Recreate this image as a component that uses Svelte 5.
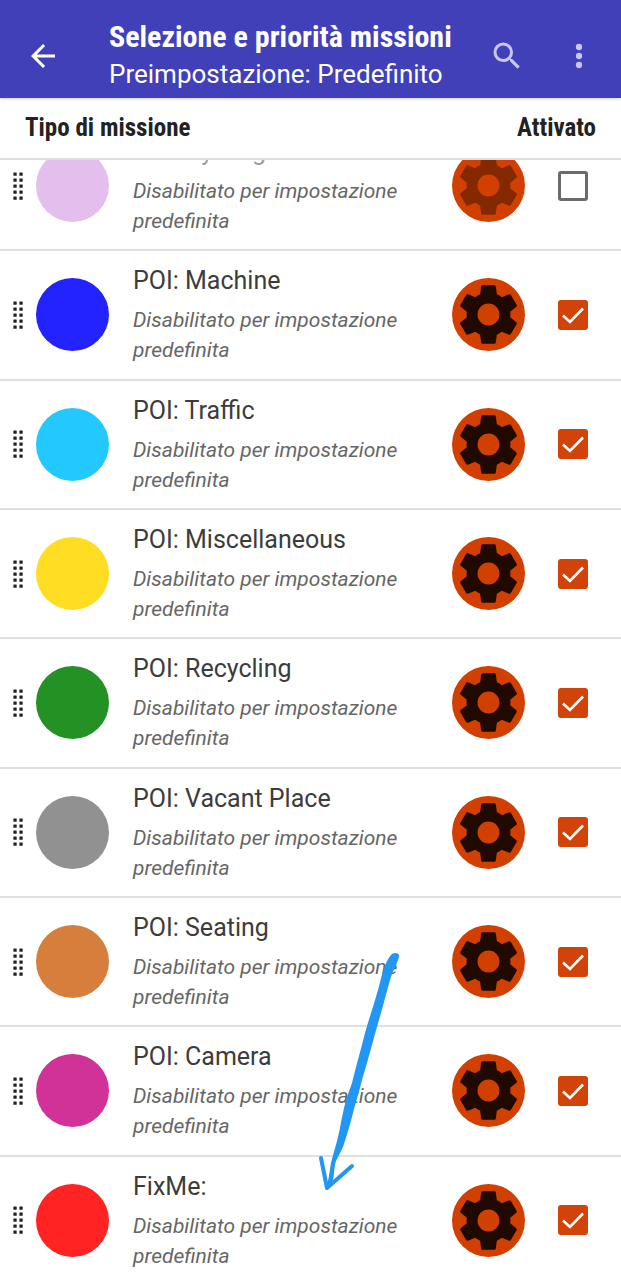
<script>
    let quests = [
        { id: "cycling", title: "POI: Cycling", color: "#e4bfed", enabled: false },
        { id: "machine", title: "POI: Machine", color: "#2323ff", enabled: true },
        { id: "traffic", title: "POI: Traffic", color: "#23c8ff", enabled: true },
        { id: "misc", title: "POI: Miscellaneous", color: "#ffdd23", enabled: true },
        { id: "recycling", title: "POI: Recycling", color: "#239123", enabled: true },
        { id: "vacant", title: "POI: Vacant Place", color: "#919191", enabled: true },
        { id: "seating", title: "POI: Seating", color: "#d67f3c", enabled: true },
        { id: "camera", title: "POI: Camera", color: "#d03297", enabled: true },
        { id: "fixme", title: "FixMe:", color: "#ff2323", enabled: true },
    ];

    const dotRows = [0.4, 6.4, 12.4, 18.4, 24.4];
</script>

<div class="screen">
    <header class="toolbar">
        <button class="icon-button" type="button" aria-label="Indietro">
            <svg width="36" height="36" viewBox="0 0 24 24">
                <path fill="#fff" d="M20 11H7.83l5.59-5.59L12 4l-8 8 8 8 1.41-1.41L7.83 13H20z" />
            </svg>
        </button>
        <div class="titles">
            <h1>Selezione e priorità missioni</h1>
            <p>Preimpostazione: Predefinito</p>
        </div>
        <button class="icon-button" type="button" aria-label="Cerca">
            <svg width="36" height="36" viewBox="0 0 24 24">
                <path
                    fill="#c9c5f6"
                    d="M15.5 14h-.79l-.28-.27A6.47 6.47 0 0 0 16 9.5 6.5 6.5 0 1 0 9.5 16c1.61 0 3.09-.59 4.23-1.57l.27.28v.79l5 4.99L20.49 19zm-6 0a4.5 4.5 0 1 1 0-9 4.5 4.5 0 0 1 0 9z"
                />
            </svg>
        </button>
        <button class="icon-button" type="button" aria-label="Altre opzioni">
            <svg width="36" height="36" viewBox="0 0 24 24" fill="#c9c5f6">
                <circle cx="12" cy="6" r="2.1" />
                <circle cx="12" cy="12" r="2.1" />
                <circle cx="12" cy="18" r="2.1" />
            </svg>
        </button>
    </header>

    <div class="columns">
        <span>Tipo di missione</span>
        <span>Attivato</span>
    </div>

    <main class="viewport">
        <ul>
            {#each quests as quest (quest.id)}
                <li class:disabled={!quest.enabled}>
                    <svg class="handle" width="10" height="28" viewBox="0 0 10 28" fill="#222">
                        {#each dotRows as y}
                            <rect x="0.4" {y} width="3.3" height="3.3" rx="0.5" />
                            <rect x="6.4" {y} width="3.3" height="3.3" rx="0.5" />
                        {/each}
                    </svg>
                    <span class="dot" style="background-color: {quest.color}"></span>
                    <div class="text">
                        <label for={quest.id}>{quest.title}</label>
                        <p>Disabilitato per impostazione predefinita</p>
                    </div>
                    <button class="settings" type="button" aria-label="Impostazioni">
                        <svg viewBox="0 0 24 24">
                            <path
                                d="M19.14 12.94c.04-.3.06-.61.06-.94 0-.32-.02-.64-.07-.94l2.03-1.58c.18-.14.23-.41.12-.61l-1.92-3.32c-.12-.22-.37-.29-.59-.22l-2.39.96c-.5-.38-1.03-.7-1.62-.94l-.36-2.54c-.04-.24-.24-.41-.48-.41h-3.84c-.24 0-.43.17-.47.41l-.36 2.54c-.59.24-1.13.57-1.62.94l-2.39-.96c-.22-.08-.47 0-.59.22L2.74 8.87c-.12.21-.08.47.12.61l2.03 1.58c-.05.3-.09.63-.09.94s.02.64.07.94l-2.03 1.58c-.18.14-.23.41-.12.61l1.92 3.32c.12.22.37.29.59.22l2.39-.96c.5.38 1.03.7 1.62.94l.36 2.54c.05.24.24.41.48.41h3.84c.24 0 .44-.17.47-.41l.36-2.54c.59-.24 1.13-.56 1.62-.94l2.39.96c.22.08.47 0 .59-.22l1.92-3.32c.12-.22.07-.47-.12-.61zM12 15.6a3.6 3.6 0 1 1 0-7.2 3.6 3.6 0 0 1 0 7.2z"
                            />
                        </svg>
                    </button>
                    <span class="check">
                        <input id={quest.id} type="checkbox" bind:checked={quest.enabled} />
                        <svg width="30" height="30" viewBox="0 0 30 30">
                            <path d="M5 15.5l7 6.5L25 8.5" fill="none" stroke="#fff" stroke-width="2.6" />
                        </svg>
                    </span>
                </li>
            {/each}
        </ul>
    </main>

    <svg class="arrow" width="90" height="250" viewBox="0 0 90 250">
        <path
            d="M77 4C79 1 86 1 85 6C83 13 79 19 76 29C72 43 69 56 64 72C59 90 54 109 48 129C45 142 41 153 38 166C35 177 32 187 29 196C26 203 22 208 21 214C20 219 20 224 19 229L13 238L11 237C15 232 15 222 17 212C19 203 22 195 24 186C26 178 27 170 29 162C31 151 34 143 38 132C42 115 47 98 51 82C55 68 60 53 64 39C68 25 69 14 77 4Z"
        />
        <path class="head" d="M7 207L13 237L38 215" />
    </svg>
</div>

<style>
    :global(body) {
        margin: 0;
    }

    .screen {
        position: relative;
        display: flex;
        flex-direction: column;
        height: 100vh;
        overflow: hidden;
        background-color: #fff;
        font-family: Roboto, sans-serif;
    }

    .toolbar {
        display: flex;
        align-items: center;
        gap: 12px;
        box-sizing: border-box;
        height: 98px;
        padding: 14px 12px 0 13px;
        background-color: #4140b9;
        color: #fff;
        box-shadow: 0 1px 3px rgba(0, 0, 0, 0.2);
    }

    .icon-button {
        display: flex;
        align-items: center;
        justify-content: center;
        width: 60px;
        height: 60px;
        padding: 0;
        border: none;
        background: none;
        cursor: pointer;
    }

    .titles {
        flex: 1;
        padding-left: 24px;
        white-space: nowrap;
    }

    h1,
    p {
        margin: 0;
    }

    h1 {
        font-family: "Roboto Condensed", Roboto, sans-serif;
        font-size: 30px;
        font-weight: 700;
        line-height: 36px;
    }

    .titles p {
        font-size: 26px;
        line-height: 38px;
    }

    .columns {
        display: flex;
        justify-content: space-between;
        padding: 12px 25px;
        border-bottom: 2px solid #dedede;
        color: #222;
        font-family: "Roboto Condensed", Roboto, sans-serif;
        font-size: 25px;
        font-weight: 700;
        line-height: 36px;
    }

    .viewport {
        display: flex;
        flex: 1;
        min-height: 0;
        overflow: hidden;
    }

    /* the list is scrolled a little, so it runs past both edges */
    ul {
        display: flex;
        flex: 1;
        flex-direction: column;
        margin: -38px 0 -6px;
        padding: 0;
        list-style: none;
    }

    li {
        display: flex;
        flex: 1;
        align-items: center;
        box-sizing: border-box;
        padding: 0 33px 0 13px;
        border-bottom: 2px solid #e0e0e0;
    }

    .handle {
        flex: none;
    }

    .dot {
        flex: none;
        width: 73px;
        height: 73px;
        margin-left: 13px;
        border-radius: 50%;
    }

    .text {
        flex: 1;
        padding: 0 40px 0 24px;
    }

    .text label {
        display: block;
        color: #3c3c3c;
        font-size: 25px;
        line-height: 34px;
    }

    .text p {
        margin-top: 7px;
        color: #666;
        font-size: 21px;
        font-style: italic;
        line-height: 30px;
    }

    .disabled label {
        opacity: 0.5;
    }

    .settings {
        flex: none;
        width: 73px;
        height: 73px;
        padding: 0;
        border: none;
        border-radius: 50%;
        background-color: #d14000;
        cursor: pointer;
    }

    .settings svg {
        display: block;
        width: 100%;
        height: 100%;
        fill: #200a00;
    }

    .disabled .settings svg {
        fill: #842800;
    }

    .check {
        position: relative;
        flex: none;
        width: 30px;
        height: 30px;
        margin-left: 33px;
    }

    .check input {
        display: block;
        box-sizing: border-box;
        width: 30px;
        height: 30px;
        margin: 0;
        border: 3px solid #6b6b6b;
        border-radius: 3px;
        appearance: none;
        cursor: pointer;
    }

    .check input:checked {
        border-color: #d14309;
        background-color: #d14309;
    }

    .check svg {
        position: absolute;
        inset: 0;
        visibility: hidden;
        pointer-events: none;
    }

    .check input:checked + svg {
        visibility: visible;
    }

    .arrow {
        position: absolute;
        top: 951px;
        left: 314px;
        fill: #2196f3;
        pointer-events: none;
    }

    .arrow .head {
        fill: none;
        stroke: #2196f3;
        stroke-width: 4;
        stroke-linecap: round;
        stroke-linejoin: round;
    }
</style>
